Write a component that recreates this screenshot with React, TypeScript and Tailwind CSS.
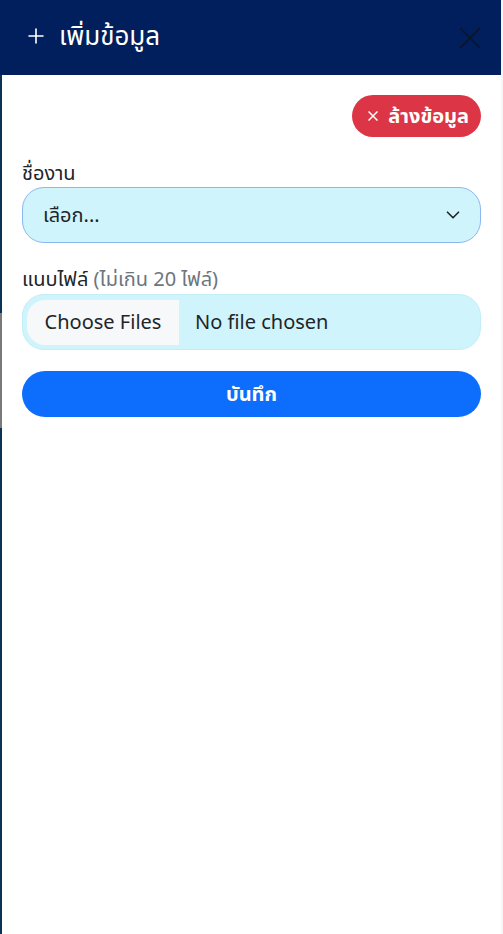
import { ChevronDown } from "lucide-react";

const font = { fontFamily: '"Noto Sans", "Noto Sans Thai", "Open Sans", sans-serif' };

export default function App() {
  return (
    <div className="flex h-[934px] w-[503px] overflow-hidden bg-white" style={font}>
      {/* sliver of the page behind the offcanvas */}
      <div className="flex w-[2px] flex-col bg-[#0b3356]">
        <div className="h-[75px] bg-[#001f5c]" />
        <div className="h-[238px]" />
        <div className="h-[115px] bg-[#7a7a7a]" />
        <div className="flex-1" />
      </div>

      <div className="flex flex-1 flex-col">
        <div className="flex h-[75px] items-center justify-between bg-[#001f5c] pb-[4px] pl-[22px] pr-[20px]">
          <h5 className="flex items-center gap-[11px] text-[26px] text-white">
            <svg width="24" height="24" viewBox="0 0 24 24" fill="none" stroke="currentColor" strokeWidth="1.6" strokeLinecap="round">
              <path d="M12 5v14M5 12h14" />
            </svg>
            <span>เพิ่มข้อมูล</span>
          </h5>
          <svg width="22" height="22" viewBox="0 0 22 22" fill="none" stroke="#0a1733" strokeWidth="2" className="mt-[4px]">
            <path d="M1 1l20 20M21 1L1 21" />
          </svg>
        </div>

        <div className="flex flex-col px-5 pt-5">
          <div className="flex justify-end">
            <button className="flex h-[42px] items-center gap-[10px] rounded-full bg-[#dc3545] pl-4 pr-[12px] text-[20px] font-bold text-white">
              <svg width="10" height="10" viewBox="0 0 10 10" fill="none" stroke="currentColor" strokeWidth="1.5">
                <path d="M0.5 0.5l9 9M9.5 0.5l-9 9" />
              </svg>
              ล้างข้อมูล
            </button>
          </div>

          <label className="mt-[22px] mb-[1px] text-[20px] leading-[27px] text-[#212529]">ชื่องาน</label>
          <div className="flex h-[56px] items-center justify-between rounded-[22px] border border-[#8bb8f0] bg-[#cff4fc] pl-5 pr-[16px] text-[20px] text-[#212529]">
            <span>เลือก...</span>
            <ChevronDown className="h-[22px] w-[22px]" strokeWidth={1.8} />
          </div>

          <label className="mt-[22px] mb-[2px] text-[20px] leading-[27px] text-[#212529]">
            แนบไฟล์ <span className="text-[#6c757d]">(ไม่เกิน 20 ไฟล์)</span>
          </label>
          <div className="flex h-[56px] items-center rounded-[22px] border border-[#c3eef8] bg-[#cff4fc] text-[20px] text-[#212529]">
            <div className="ml-[4px] flex h-[45px] w-[152px] items-center justify-center rounded-l-[18px] bg-[#f6f8f9]">
              Choose Files
            </div>
            <span className="ml-4">No file chosen</span>
          </div>

          <button className="mt-[21px] h-[46px] rounded-full bg-[#0d6efd] text-[20px] font-bold text-white">
            บันทึก
          </button>
        </div>
      </div>

      <div className="w-[2px] bg-[#f6f6f6]" />
    </div>
  );
}
